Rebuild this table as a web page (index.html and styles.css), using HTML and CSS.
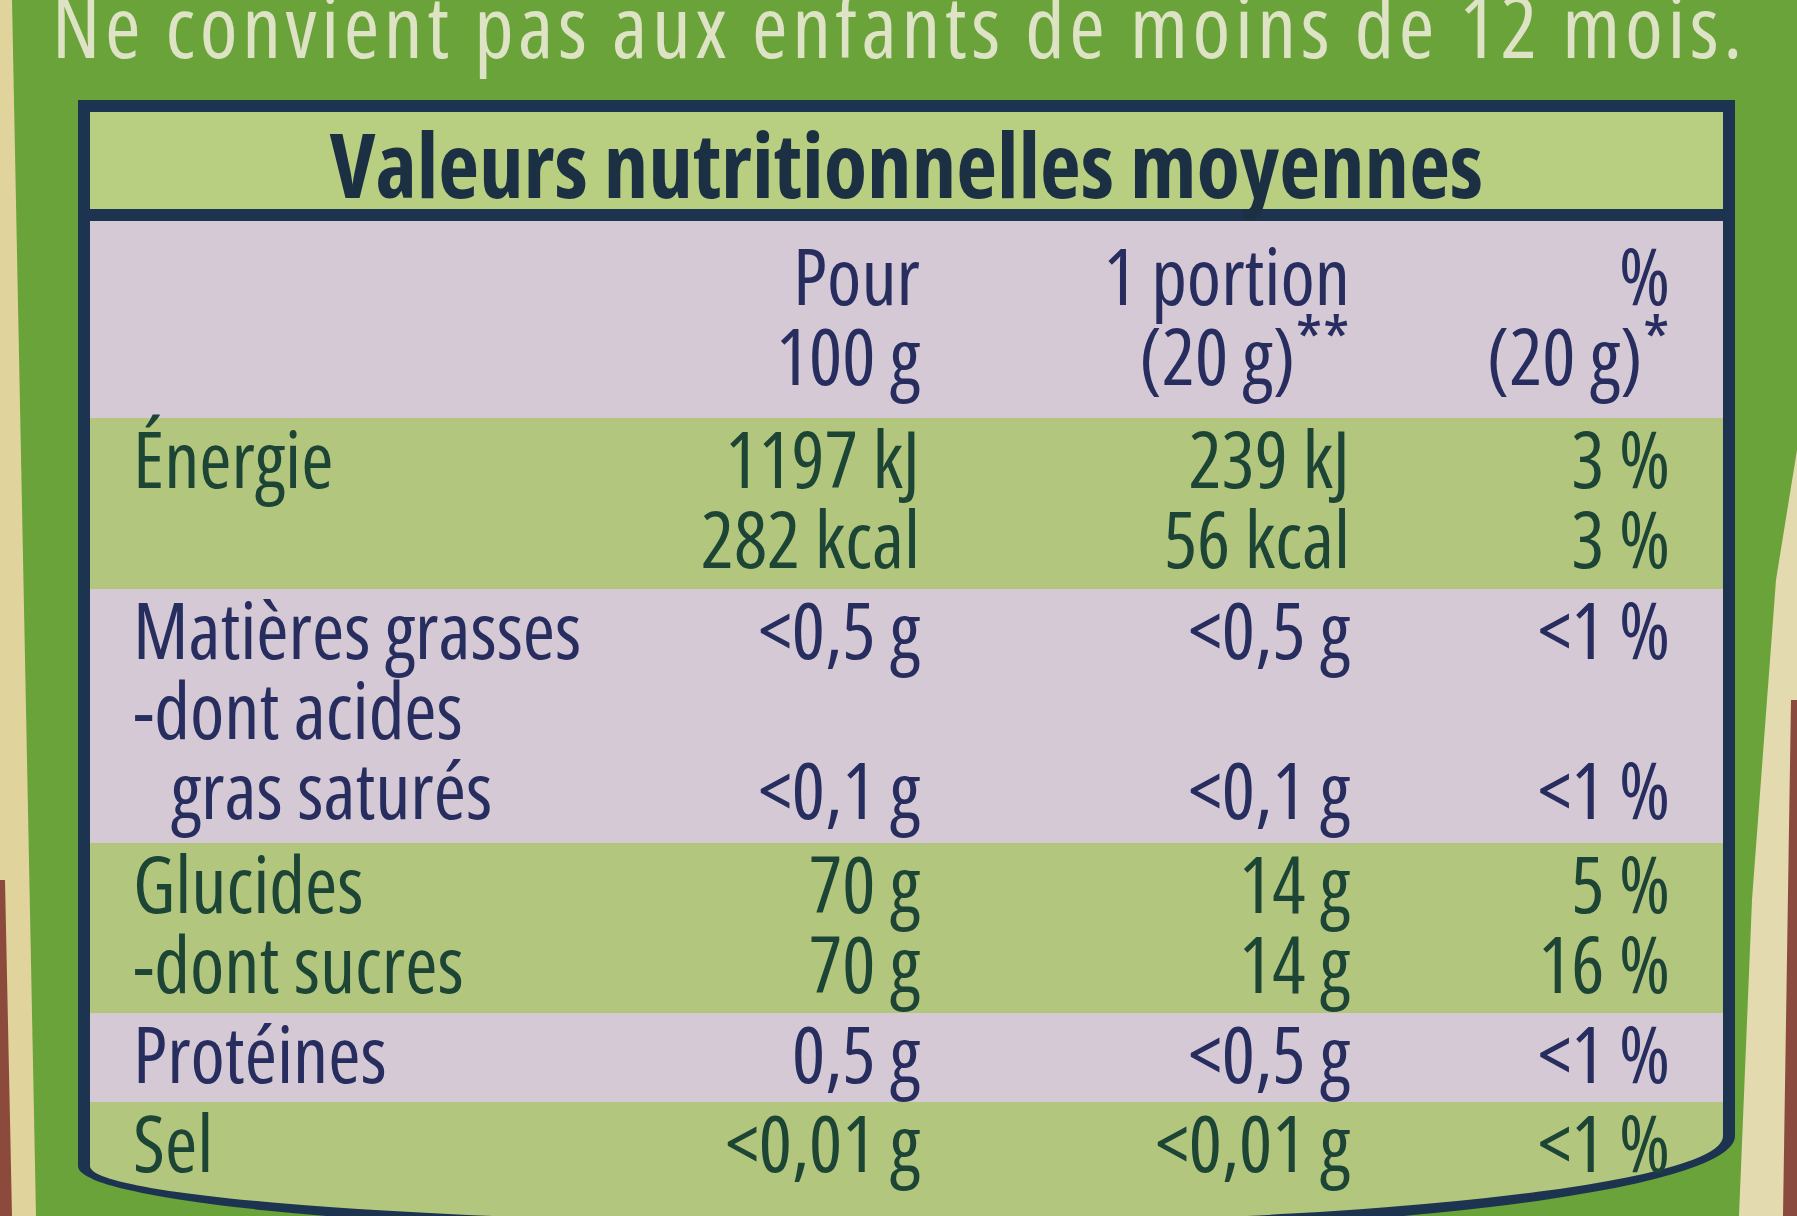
FILE: index.html
```html
<!DOCTYPE html>
<html lang="fr">
<head>
<meta charset="utf-8">
<title>Valeurs nutritionnelles moyennes</title>
<link rel="stylesheet" href="styles.css">
</head>
<body>
<div class="scene">
  <div class="edge edge-left"></div>
  <div class="edge edge-left-red"></div>
  <div class="edge edge-right"></div>
  <div class="edge edge-right-red"></div>

  <p class="warning">Ne convient pas aux enfants de moins de 12 mois.</p>

  <section class="panel">
    <h1 class="title">Valeurs nutritionnelles moyennes</h1>

    <div class="row pink head">
      <div class="name"></div>
      <div class="val">Pour<br>100 g</div>
      <div class="val">1 portion<br>(20 g)<span class="ast">**</span></div>
      <div class="val">%<br>(20 g)<span class="ast">*</span></div>
    </div>

    <div class="row green energy">
      <div class="name">Énergie</div>
      <div class="val">1197 kJ<br>282 kcal</div>
      <div class="val">239 kJ<br>56 kcal</div>
      <div class="val">3 %<br>3 %</div>
    </div>

    <div class="row pink fat">
      <div class="name">Matières grasses<br>-dont acides<br><span class="indent">gras saturés</span></div>
      <div class="val">&lt;0,5 g<br><br>&lt;0,1 g</div>
      <div class="val">&lt;0,5 g<br><br>&lt;0,1 g</div>
      <div class="val">&lt;1 %<br><br>&lt;1 %</div>
    </div>

    <div class="row green carbs">
      <div class="name">Glucides<br>-dont sucres</div>
      <div class="val">70 g<br>70 g</div>
      <div class="val">14 g<br>14 g</div>
      <div class="val">5 %<br>16 %</div>
    </div>

    <div class="row pink protein">
      <div class="name">Protéines</div>
      <div class="val">0,5 g</div>
      <div class="val">&lt;0,5 g</div>
      <div class="val">&lt;1 %</div>
    </div>

    <div class="row green salt">
      <div class="name">Sel</div>
      <div class="val">&lt;0,01 g</div>
      <div class="val">&lt;0,01 g</div>
      <div class="val">&lt;1 %</div>
    </div>
  </section>
</div>
</body>
</html>
```
FILE: styles.css
```css
html, body {
  margin: 0;
  height: 1216px;
  overflow: hidden;
}

body {
  background: #69a339;
  font-family: "Open Sans", "Noto Sans", sans-serif;
  font-stretch: 75%;
}

.scene {
  position: relative;
  height: 1216px;
}

/* decorative jar edges (background of the photo) */
.edge {
  position: absolute;
}
.edge-left {
  left: 0;
  top: 0;
  width: 50px;
  height: 1216px;
  background: #e0d49c;
  clip-path: polygon(0 0, 12px 0, 36px 100%, 0 100%);
}
.edge-left-red {
  left: 0;
  top: 880px;
  width: 20px;
  height: 336px;
  background: #8c4a3c;
  clip-path: polygon(0 0, 5px 0, 12px 100%, 0 100%);
}
.edge-right {
  right: 0;
  top: 450px;
  width: 62px;
  height: 766px;
  background: #e3dab0;
  clip-path: polygon(100% 0, 100% 100%, 4px 100%, 17px 450px, 41px 130px);
}
.edge-right-red {
  right: 0;
  top: 700px;
  width: 16px;
  height: 516px;
  background: #8a4a3d;
  clip-path: polygon(10px 0, 100% 0, 100% 100%, 2px 100%);
}

.warning {
  position: relative;
  margin: 0;
  padding-left: 52px;
  height: 50px;
  font-size: 86px;
  line-height: 50px;
  letter-spacing: 4.6px;
  color: #dde3c4;
  white-space: nowrap;
}

.panel {
  position: relative;
  box-sizing: border-box;
  margin: 50px 0 0 78px;
  width: 1657px;
  height: 1136px;
  border: 12px solid #1d3450;
  border-radius: 0 0 50% 50% / 0 0 100px 70px;
  background: #b3c67d;
  display: flex;
  flex-direction: column;
}

.title {
  margin: 0;
  height: 90px;
  padding-top: 7px;
  border-bottom: 12px solid #1d3450;
  background: #b8ce80;
  color: #1b3043;
  text-align: center;
  font-size: 89px;
  line-height: 89px;
  font-weight: 700;
  white-space: nowrap;
}

.row {
  display: grid;
  grid-template-columns: 530px 300px 430px 320px;
  padding-right: 53px;
  font-size: 78px;
  line-height: 80px;
  white-space: nowrap;
}

.pink {
  background: #d5c9d5;
  color: #272d5e;
}
.green {
  background: #b3c67d;
  color: #1d4536;
}

.name {
  padding-left: 43px;
}
.indent {
  display: inline-block;
  padding-left: 38px;
}
.val {
  text-align: right;
}
.ast {
  font-size: 0.9em;
  line-height: 0;
  vertical-align: 0.25em;
}

.head {
  padding-top: 14px;
  padding-bottom: 23px;
}
.energy {
  padding-bottom: 11px;
}
.fat {
  padding-bottom: 14px;
}
.carbs {
  padding-bottom: 10px;
}
.protein {
  padding-bottom: 9px;
}
.salt {
  flex: 1;
  background: transparent;
}
```
